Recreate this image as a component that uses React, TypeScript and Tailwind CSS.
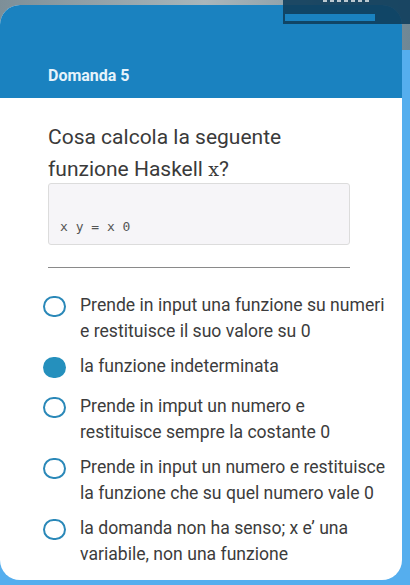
import React from 'react';

const options = [
    { lines: ['Prende in input una funzione su numeri', 'e restituisce il suo valore su 0'], checked: false },
    { lines: ['la funzione indeterminata'], checked: true },
    { lines: ['Prende in imput un numero e', 'restituisce sempre la costante 0'], checked: false },
    { lines: ['Prende in input un numero e restituisce', 'la funzione che su quel numero vale 0'], checked: false },
    { lines: ['la domanda non ha senso; x e’ una', 'variabile, non una funzione'], checked: false },
];

export default function App() {
    return (
        <div
            className="relative w-[410px] h-[585px] overflow-hidden bg-[#55aeee]"
            style={{ fontFamily: 'Roboto, "Noto Sans", sans-serif' }}
        >
            {/* photo strip behind the card */}
            <div className="h-[50px] bg-gradient-to-r from-[#7d8f98] via-[#a9b6bb] to-[#6f8794]"></div>

            {/* card */}
            <div className="absolute left-0 top-[5px] w-[402px] h-[575px] rounded-[20px] bg-white overflow-hidden flex flex-col">
                <div className="h-[93px] shrink-0 bg-[#1a82c0] flex items-end pb-[13px] pl-[48px]">
                    <span className="text-[16px] leading-[19px] font-bold text-[#e6f3fb]">Domanda 5</span>
                </div>

                <div className="pl-[48px] pr-[52px] pt-[23px]">
                    <h2 className="text-[21px] leading-[32px] text-[#3a3a3a] whitespace-nowrap">
                        Cosa calcola la seguente
                        <br />
                        funzione Haskell{' '}
                        <span style={{ fontFamily: '"DejaVu Serif", serif' }} className="text-[19px]">x</span>?
                    </h2>

                    <div className="mt-[-2px] h-[62px] border border-[#dcdcdc] rounded-[3px] bg-[#f6f5f8] flex items-end pb-[9px] pl-[11px]">
                        <span className="text-[13px] leading-[16px] text-[#555]" style={{ fontFamily: '"DejaVu Sans Mono", monospace' }}>
                            x y = x 0
                        </span>
                    </div>

                    <div className="mt-[22px] h-px bg-[#8a8a8a]"></div>
                </div>

                <div className="pl-[43px] pr-[10px] pt-[24px] flex flex-col gap-[9px]">
                    {options.map((o, i) => (
                        <div key={i} className={`flex items-start gap-[14px] ${i === 1 ? 'mb-[5px]' : ''}`}>
                            {o.checked ? (
                                <span className="mt-[4px] shrink-0 w-[23px] h-[21px] rounded-full bg-[#2590bd]"></span>
                            ) : (
                                <span className="mt-[4px] shrink-0 w-[23px] h-[21px] rounded-full border-[2.5px] border-[#2a88b8]"></span>
                            )}
                            <span className="text-[17.6px] leading-[26px] text-[#3c3c3c] whitespace-nowrap">
                                {o.lines.map((l, j) => (
                                    <span key={j} className="block">{l}</span>
                                ))}
                            </span>
                        </div>
                    ))}
                </div>
            </div>

            {/* overlay in the top right */}
            <div className="absolute top-0 left-[283px] w-[127px] h-[24px] bg-[#0f3e5c]/90">
                <div className="absolute left-[2px] top-[14px] w-[90px] h-[7px] bg-[#1a82c0]"></div>
                <div className="absolute left-[40px] top-0 flex gap-[3px]">
                    {[0, 1, 2, 3, 4, 5, 6].map((k) => (
                        <span key={k} className="w-[4px] h-[2px] bg-white/70"></span>
                    ))}
                </div>
            </div>
        </div>
    );
}
